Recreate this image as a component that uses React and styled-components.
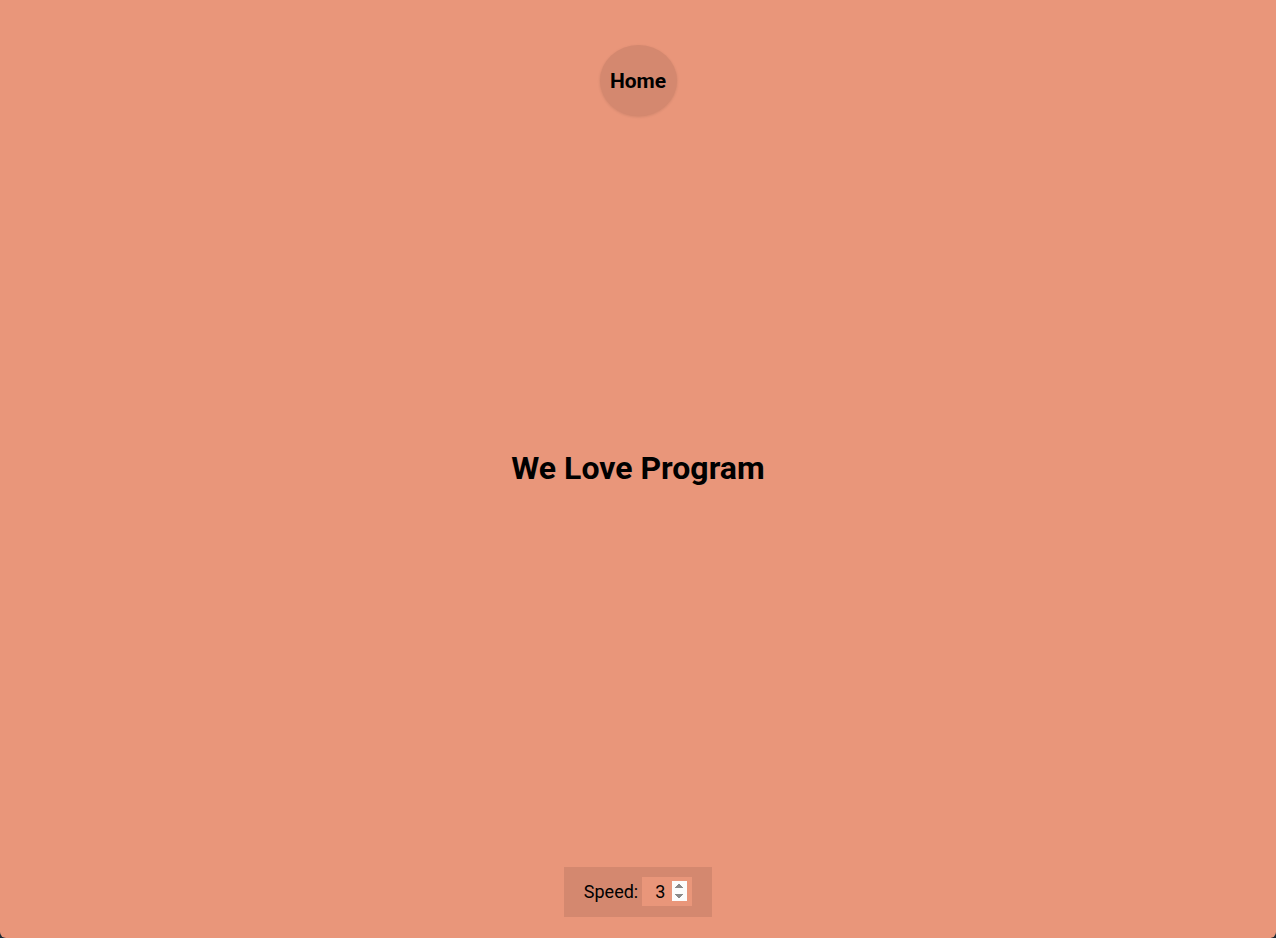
import React, { useState } from "react";
import styled, { createGlobalStyle } from "styled-components";

const GlobalStyle = createGlobalStyle`
  html, body {
    margin: 0;
    padding: 0;
    background: #1d2a35;
  }
  body {
    font-family: Roboto, "Liberation Sans", sans-serif;
  }
`;

const Page = styled.div`
  height: 100vh;
  box-sizing: border-box;
  background: #e9967a;
  border-radius: 0 0 6px 6px;
  display: flex;
  flex-direction: column;
  align-items: center;
  padding: 45px 0 21px;
`;

const HomeButton = styled.button`
  width: 77px;
  height: 71px;
  border-radius: 50%;
  border: none;
  background: #d4886f;
  box-shadow: 0 1px 3px rgba(0, 0, 0, 0.12);
  font-family: inherit;
  font-weight: 700;
  font-size: 21px;
  color: #000;
  cursor: pointer;
  padding: 0;
`;

const Main = styled.main`
  flex: 1;
  display: flex;
  align-items: center;
  justify-content: center;
`;

const Title = styled.h1`
  margin: 0 0 48px;
  font-size: 32px;
  font-weight: 700;
  color: #000;
`;

const Controls = styled.div`
  display: flex;
  align-items: center;
  gap: 4px;
  background: #d4886f;
  padding: 10px 20px 11px;
  font-size: 18px;
  color: #000;
`;

const SpeedInput = styled.input`
  width: 50px;
  height: 29px;
  box-sizing: border-box;
  border: none;
  outline: none;
  background: #e9967a;
  font-family: inherit;
  font-size: 18px;
  text-align: center;
  padding: 0 5px 0 6px;
  color: #000;
  caret-color: #000;
`;

export default function App() {
  const [speed, setSpeed] = useState(3);
  return (
    <>
      <GlobalStyle />
      <Page>
        <HomeButton>Home</HomeButton>
        <Main>
          <Title>We Love Program</Title>
        </Main>
        <Controls>
          <label htmlFor="speed">Speed:</label>
          <SpeedInput
            id="speed"
            type="number"
            autoFocus
            value={speed}
            onChange={e => setSpeed(e.target.value)}
          />
        </Controls>
      </Page>
    </>
  );
}
